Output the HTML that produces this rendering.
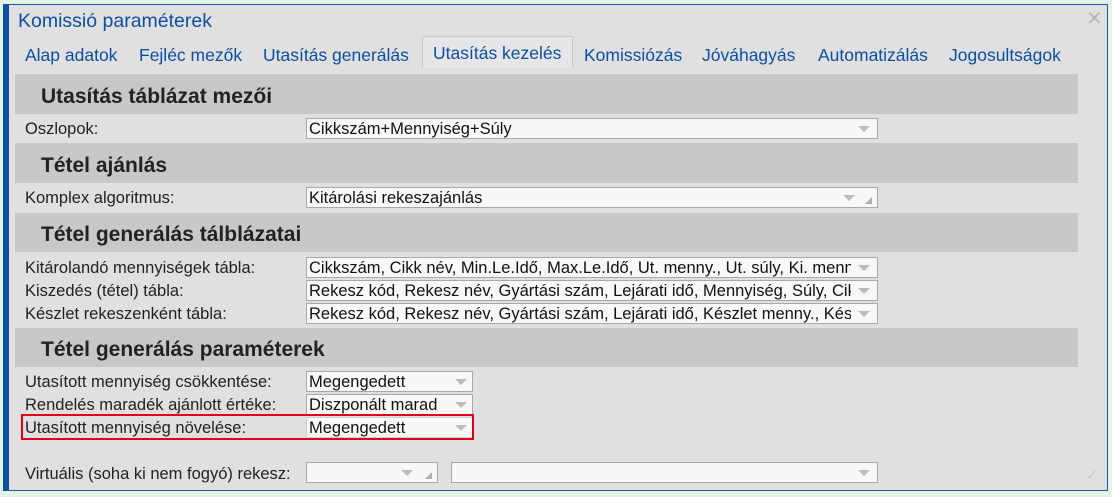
<!DOCTYPE html>
<html><head><meta charset="utf-8"><style>
*{box-sizing:border-box;margin:0;padding:0}
body{width:1112px;height:497px;overflow:hidden;background:#e3f3e4;font-family:"Liberation Sans",Arial,sans-serif;position:relative}
.dlg{position:absolute;left:3px;top:4px;width:1105px;height:487px;background:#e0e0e0;border:1px solid #1e5aa8;border-left:6px solid #0d4fa0}
.a{position:absolute;white-space:nowrap}
.title{left:18px;top:10px;font-size:19.5px;color:#0d4fa0}
.tab{top:45px;font-size:17.5px;color:#0d4fa0}
.hdr{position:absolute;left:15px;width:1063px;background:#c8c8c8;font-weight:bold;font-size:21px;color:#222;padding-left:26px}
.lbl{position:absolute;left:25px;font-size:16.5px;color:#222}
.inp{position:absolute;background:#f8f8f8;border:1px solid #a8a8a8;height:21px;font-size:16.5px;color:#111;padding-left:2px;line-height:20px;overflow:hidden;white-space:nowrap}
.inp .t{display:block;overflow:hidden}
.arr{position:absolute;top:7px;width:0;height:0;border-left:6px solid transparent;border-right:6px solid transparent;border-top:6px solid #bbb}
.rz{position:absolute;bottom:3px;width:0;height:0;border-left:7px solid transparent;border-bottom:7px solid #b0b0b0}
</style></head><body>
<div class="dlg"></div>
<div class="a title">Komissió paraméterek</div>
<div class="a" style="left:1086px;top:6px;font-size:20px;color:#b8b8b8">✕</div>
<div class="a" style="left:422px;top:36px;width:151px;height:32px;background:#e6e6e6;border:1px solid #c8c8c8;border-bottom:none"></div>
<div class="a tab" style="left:25px">Alap adatok</div>
<div class="a tab" style="left:139px">Fejléc mezők</div>
<div class="a tab" style="left:263px">Utasítás generálás</div>
<div class="a tab" style="left:433px;top:43px">Utasítás kezelés</div>
<div class="a tab" style="left:584px">Komissiózás</div>
<div class="a tab" style="left:702px">Jóváhagyás</div>
<div class="a tab" style="left:818px">Automatizálás</div>
<div class="a tab" style="left:949px">Jogosultságok</div>

<div class="hdr" style="top:74px;height:40px;line-height:45px">Utasítás táblázat mezői</div>
<div class="lbl" style="top:120px">Oszlopok:</div>
<div class="inp" style="left:306px;top:118px;width:572px"><span class="t" style="width:540px">Cikkszám+Mennyiség+Súly</span><i class="arr" style="left:551px"></i></div>

<div class="hdr" style="top:143px;height:40px;line-height:45px">Tétel ajánlás</div>
<div class="lbl" style="top:189px">Komplex algoritmus:</div>
<div class="inp" style="left:306px;top:187px;width:572px"><span class="t" style="width:530px">Kitárolási rekeszajánlás</span><i class="arr" style="left:536px"></i><i class="rz" style="left:558px"></i></div>

<div class="hdr" style="top:213px;height:39px;line-height:44px">Tétel generálás tálblázatai</div>
<div class="lbl" style="top:259px">Kitárolandó mennyiségek tábla:</div>
<div class="inp" style="left:306px;top:257px;width:572px"><span class="t" style="width:542px">Cikkszám, Cikk név, Min.Le.Idő, Max.Le.Idő, Ut. menny., Ut. súly, Ki. menny.</span><i class="arr" style="left:551px"></i></div>
<div class="lbl" style="top:282px">Kiszedés (tétel) tábla:</div>
<div class="inp" style="left:306px;top:280px;width:572px"><span class="t" style="width:542px">Rekesz kód, Rekesz név, Gyártási szám, Lejárati idő, Mennyiség, Súly, Cikkszám</span><i class="arr" style="left:551px"></i></div>
<div class="lbl" style="top:305px">Készlet rekeszenként tábla:</div>
<div class="inp" style="left:306px;top:303px;width:572px"><span class="t" style="width:542px">Rekesz kód, Rekesz név, Gyártási szám, Lejárati idő, Készlet menny., Készlet</span><i class="arr" style="left:551px"></i></div>

<div class="hdr" style="top:328px;height:39px;line-height:44px">Tétel generálás paraméterek</div>
<div class="lbl" style="top:373px">Utasított mennyiség csökkentése:</div>
<div class="inp" style="left:306px;top:371px;width:167px"><span class="t">Megengedett</span><i class="arr" style="left:148px"></i></div>
<div class="lbl" style="top:396px">Rendelés maradék ajánlott értéke:</div>
<div class="inp" style="left:306px;top:394px;width:167px"><span class="t">Diszponált marad</span><i class="arr" style="left:148px"></i></div>
<div class="lbl" style="top:419px">Utasított mennyiség növelése:</div>
<div class="inp" style="left:306px;top:417px;width:167px;border-color:#d0d0d0"><span class="t">Megengedett</span><i class="arr" style="left:148px"></i></div>
<div class="a" style="left:21px;top:414px;width:453px;height:26px;border:2px solid #e0001a"></div>

<div class="lbl" style="top:465px">Virtuális (soha ki nem fogyó) rekesz:</div>
<div class="inp" style="left:306px;top:462px;width:132px"><i class="arr" style="left:94px"></i><i class="rz" style="left:118px"></i></div>
<div class="inp" style="left:451px;top:462px;width:427px"><i class="arr" style="left:406px"></i></div>
<div class="a" style="left:1086px;top:466px;font-size:15px;color:#c8c8c8">✓</div>
</body></html>
